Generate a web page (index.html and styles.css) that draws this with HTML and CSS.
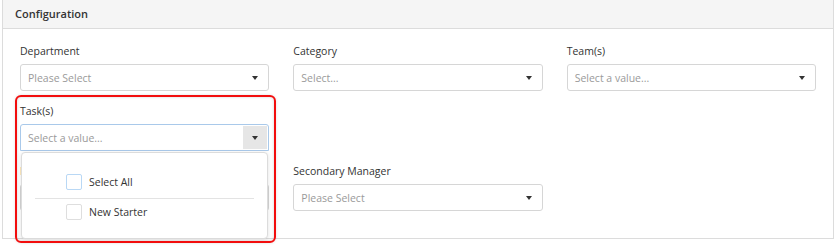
FILE: index.html
```html
<!DOCTYPE html>
<html>
<head>
<meta charset="utf-8">
<link rel="stylesheet" href="styles.css">
</head>
<body>
<div class="panel">
  <div class="panel-header">Configuration</div>
  <div class="panel-body">
    <div class="field">
      <label class="label">Department</label>
      <div class="select"><span class="placeholder">Please Select</span><span class="caret"></span></div>
    </div>
    <div class="field">
      <label class="label">Category</label>
      <div class="select"><span class="placeholder">Select...</span><span class="caret"></span></div>
    </div>
    <div class="field">
      <label class="label">Team(s)</label>
      <div class="select"><span class="placeholder">Select a value...</span><span class="caret"></span></div>
    </div>

    <div class="field open">
      <label class="label">Task(s)</label>
      <div class="select focused"><span class="placeholder">Select a value...</span><span class="caret-btn"><span class="caret"></span></span></div>
      <div class="dropdown">
        <div class="opt first"><span class="check hover"></span><span>Select All</span></div>
        <div class="opt"><span class="check"></span><span>New Starter</span></div>
      </div>
    </div>
    <div class="field empty"></div>
    <div class="field empty"></div>

    <div class="field">
      <label class="label">Manager</label>
      <div class="select"><span class="placeholder">Please Select</span><span class="caret"></span></div>
    </div>
    <div class="field">
      <label class="label">Secondary Manager</label>
      <div class="select"><span class="placeholder">Please Select</span><span class="caret"></span></div>
    </div>
    <div class="field empty"></div>
  </div>
</div>
<div class="highlight"></div>
</body>
</html>
```

FILE: styles.css
```css
* { box-sizing: border-box; }
html, body { margin: 0; padding: 0; background: #fff; }
body {
  font-family: "Open Sans", "Noto Sans", sans-serif;
  font-size: 10.5px;
  color: #333;
  position: relative;
  width: 836px;
  height: 249px;
  overflow: hidden;
}
.panel {
  margin-left: 2px;
  width: 832px;
  height: 239px;
  border: 1px solid #dcdcdc;
  border-top: none;
}
.panel-header {
  height: 29px;
  background: #f5f5f5;
  border-bottom: 1px solid #dcdcdc;
  padding-left: 12px;
  font-size: 11px;
  font-weight: 600;
  line-height: 28px;
  color: #333;
}
.panel-body {
  padding: 14px 17px 0 17px;
  display: grid;
  grid-template-columns: repeat(3, 1fr);
  column-gap: 24px;
  row-gap: 12px;
}
.field { position: relative; }
.label {
  display: block;
  line-height: 16px;
  margin-bottom: 5px;
  color: #333;
}
.select {
  height: 27px;
  border: 1px solid #d6d6d6;
  border-radius: 3px;
  display: flex;
  align-items: center;
  justify-content: space-between;
  padding: 0 10px 0 7px;
  background: #fff;
}
.placeholder { color: #9a9a9a; }
.caret {
  width: 0;
  height: 0;
  border-left: 3.5px solid transparent;
  border-right: 3.5px solid transparent;
  border-top: 4px solid #333;
}
.select.focused {
  border-color: #a9c9ea;
  padding-right: 0;
  border-radius: 3px 3px 0 0;
}
.caret-btn {
  align-self: stretch;
  width: 24px;
  margin: 1px 1px 1px 0;
  background: #e6e6e6;
  display: flex;
  align-items: center;
  justify-content: center;
}
.dropdown {
  position: absolute;
  z-index: 2;
  left: 1px;
  right: 1px;
  top: calc(100% + 1px);
  height: 87px;
  background: #fff;
  border: 1px solid #dcdcdc;
  border-radius: 4px;
  box-shadow: 0 1px 4px rgba(0,0,0,0.12);
  padding: 17px 13px 0 13px;
}
.opt {
  display: flex;
  align-items: center;
  gap: 7px;
  padding: 4px 0 4px 31px;
  color: #333;
}
.opt.first {
  padding-bottom: 8px;
  border-bottom: 1px solid #e3e3e3;
}
.opt + .opt { padding-top: 5px; }
.check {
  width: 16px;
  height: 16px;
  border: 1px solid #dedede;
  border-radius: 2px;
  background: #fff;
}
.check.hover { border-color: #b9d8f5; }
.highlight {
  position: absolute;
  left: 15px;
  top: 95px;
  width: 261px;
  height: 148px;
  border: 2px solid #f20d0d;
  border-radius: 6px;
  box-shadow: inset 0 0 3px rgba(0,0,0,0.18), 0 0 3px rgba(0,0,0,0.12);
  z-index: 5;
}
```
